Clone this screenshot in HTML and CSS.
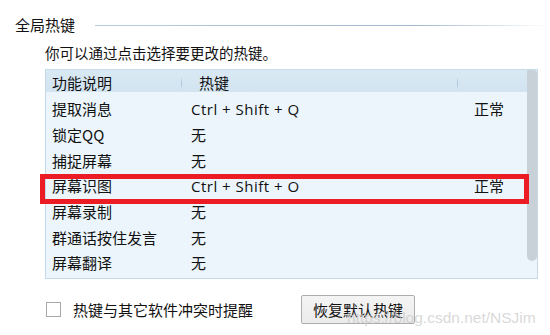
FILE: index.html
```html
<!DOCTYPE html>
<html lang="zh-CN">
<head>
<meta charset="utf-8">
<link rel="stylesheet" href="styles.css">
</head>
<body>
<div class="page">
  <div class="group-title">
    <span class="group-label">全局热键</span>
    <span class="group-line"></span>
  </div>
  <p class="intro">你可以通过点击选择要更改的热键。</p>
  <div class="table">
    <div class="table-main">
      <div class="row head">
        <div class="c1">功能说明</div>
        <div class="c2"><span class="sep"></span><span class="htext">热键</span></div>
        <div class="c3"><span class="sep"></span></div>
      </div>
      <div class="body">
        <div class="row"><div class="c1">提取消息</div><div class="c2 key">Ctrl + Shift + Q</div><div class="c3">正常</div></div>
        <div class="row"><div class="c1">锁定QQ</div><div class="c2">无</div><div class="c3"></div></div>
        <div class="row"><div class="c1">捕捉屏幕</div><div class="c2">无</div><div class="c3"></div></div>
        <div class="row marked"><div class="c1">屏幕识图</div><div class="c2 key">Ctrl + Shift + O</div><div class="c3">正常</div><span class="mark"></span></div>
        <div class="row"><div class="c1">屏幕录制</div><div class="c2">无</div><div class="c3"></div></div>
        <div class="row"><div class="c1">群通话按住发言</div><div class="c2">无</div><div class="c3"></div></div>
        <div class="row"><div class="c1">屏幕翻译</div><div class="c2">无</div><div class="c3"></div></div>
      </div>
    </div>
    <div class="scroll"><div class="thumb"></div></div>
  </div>
  <div class="footer">
    <label class="check"><span class="box"></span><span>热键与其它软件冲突时提醒</span></label>
    <button class="btn">恢复默认热键</button>
  </div>
  <div class="watermark">https://blog.csdn.net/NSJim</div>
</div>
</body>
</html>
```
FILE: styles.css
```css
* { box-sizing: border-box; }
html, body { margin: 0; padding: 0; background: #fff; }
body {
  font-family: "Open Sans", "Noto Sans CJK SC", sans-serif;
  color: #111;
  width: 550px;
  height: 335px;
  overflow: hidden;
}
.page { position: relative; width: 550px; height: 335px; padding-top: 15px; }
.group-title {
  display: flex;
  align-items: center;
  height: 20px;
  padding-left: 15px;
}
.group-label { font-size: 15px; line-height: 20px; font-family: "Noto Sans CJK SC", sans-serif; }
.group-line {
  flex: 1;
  height: 1px;
  margin-left: 20px;
  background: linear-gradient(to right, #b9cde0 0%, #9fb8d0 70%, #ffffff 100%);
}
.intro {
  margin: 8px 0 0 45px;
  font-size: 14.5px;
  line-height: 20px;
  font-family: "Noto Sans CJK SC", sans-serif;
}
.table {
  margin: 6px 0 0 45px;
  width: 493px;
  height: 210px;
  border: 1px solid #c4d8e8;
  border-top-color: #c9dcea;
  background: #ebf5fb;
  display: flex;
}
.table-main { flex: 1; }
.row {
  display: grid;
  grid-template-columns: 135px 276px 70px;
  height: 25.7px;
  align-items: center;
  font-size: 15px;
  font-family: "Noto Sans CJK SC", sans-serif;
  position: relative;
}
.row.head {
  height: 22px;
  background: linear-gradient(#d9e9f4, #d2e4f0);
  padding-top: 2px;
}
.body { padding-top: 4px; }
.c1 { padding-left: 6px; white-space: nowrap; }
.c2 { padding-left: 10px; white-space: nowrap; position: relative; height: 100%; display: flex; align-items: center; }
.c3 { padding-left: 17px; position: relative; height: 100%; display: flex; align-items: center; }
.key { font-family: "Open Sans", sans-serif; font-size: 15px; letter-spacing: 0.5px; }
.head .c2 { padding-left: 18px; }
.sep {
  position: absolute;
  left: 0;
  top: 2px;
  bottom: 0;
  width: 1px;
  background: linear-gradient(#e6f1f8, #a9c4da 50%, #e6f1f8);
}
.scroll { width: 10px; height: 100%; }
.thumb {
  height: 191px;
  background: #c8d0d8;
  border-radius: 1px 3px 5px 5px;
}
.mark {
  position: absolute;
  left: -6px;
  right: -2px;
  top: 1px;
  height: 30px;
  border: 5px solid #ec1c24;
  pointer-events: none;
}
.footer {
  display: flex;
  align-items: center;
  margin: 15px 0 0 46px;
  height: 30px;
}
.check {
  display: flex;
  align-items: center;
  font-size: 15px;
  font-family: "Noto Sans CJK SC", sans-serif;
  width: 255px;
}
.box {
  width: 15px;
  height: 15px;
  border: 1px solid #a8a8a8;
  background: #fff;
  margin-right: 12px;
}
.btn {
  width: 114px;
  height: 29px;
  border: 1px solid #adadad;
  border-radius: 2px;
  background: linear-gradient(#f4f4f4, #ebebeb);
  font-family: "Noto Sans CJK SC", sans-serif;
  font-size: 15px;
  color: #111;
  padding: 0;
}
.watermark {
  position: absolute;
  left: 347px;
  top: 309px;
  font-family: "Liberation Sans", Arial, sans-serif;
  font-size: 15.5px;
  color: rgba(200, 200, 200, 0.7);
  pointer-events: none;
}
```
